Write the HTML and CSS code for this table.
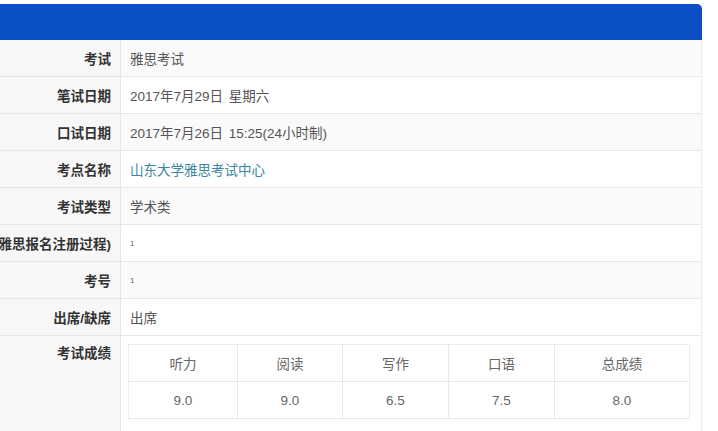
FILE: index.html
```html
<!DOCTYPE html>
<html lang="zh">
<head>
<meta charset="utf-8">
<link rel="stylesheet" href="styles.css">
</head>
<body>
<div class="panel">
  <div class="panel-head"></div>
  <div class="rows">
    <div class="row odd"><div class="label"><span>考试</span></div><div class="value">雅思考试</div></div>
    <div class="row"><div class="label"><span>笔试日期</span></div><div class="value">2017年7月29日 星期六</div></div>
    <div class="row odd"><div class="label"><span>口试日期</span></div><div class="value">2017年7月26日 15:25(24小时制)</div></div>
    <div class="row"><div class="label"><span>考点名称</span></div><div class="value"><span class="link">山东大学雅思考试中心</span></div></div>
    <div class="row odd"><div class="label"><span>考试类型</span></div><div class="value">学术类</div></div>
    <div class="row"><div class="label"><span>(雅思报名注册过程)</span></div><div class="value small">1</div></div>
    <div class="row odd"><div class="label"><span>考号</span></div><div class="value small">1</div></div>
    <div class="row"><div class="label"><span>出席/缺席</span></div><div class="value">出席</div></div>
    <div class="row last"><div class="label top"><span>考试成绩</span></div>
      <div class="value block">
        <div class="scores">
          <div class="sc head">听力</div>
          <div class="sc head">阅读</div>
          <div class="sc head">写作</div>
          <div class="sc head">口语</div>
          <div class="sc head end">总成绩</div>
          <div class="sc">9.0</div>
          <div class="sc">9.0</div>
          <div class="sc">6.5</div>
          <div class="sc">7.5</div>
          <div class="sc end">8.0</div>
        </div>
      </div>
    </div>
  </div>
</div>
</body>
</html>
```
FILE: styles.css
```css
html, body {
  margin: 0;
  padding: 0;
  background: #ffffff;
  overflow: hidden;
}
body {
  font-family: "Liberation Sans", "Noto Sans CJK SC", sans-serif;
  font-size: 13.5px;
  color: #555;
}
.panel {
  margin-top: 4px;
  width: 702px;
}
.panel-head {
  height: 36px;
  background: #0b4fc6;
  border-top-right-radius: 5px;
}
.rows {
  display: flex;
  flex-direction: column;
  border-right: 1px solid #ececec;
}
.row {
  display: grid;
  grid-template-columns: 121px 1fr;
  height: 37px;
  border-bottom: 1px solid #e6e6e6;
  box-sizing: border-box;
  background: #fff;
}
.row.odd {
  background: #fafafa;
}
.row.last {
  height: 100px;
  border-bottom: none;
}
.label {
  display: flex;
  justify-content: flex-end;
  align-items: center;
  padding-right: 9px;
  border-right: 1px solid #e6e6e6;
  background: #f7f7f7;
  font-weight: bold;
  color: #333;
  white-space: nowrap;
  min-width: 0;
}
.label.top {
  align-items: flex-start;
  padding-top: 6px;
}
.value {
  display: flex;
  align-items: center;
  padding-left: 9px;
  color: #555;
  white-space: nowrap;
  word-spacing: 2px;
}
.value.small {
  font-size: 8px;
  color: #666;
}
.value.block {
  align-items: flex-start;
  padding-left: 7px;
  padding-top: 8px;
}
.link {
  color: #3a86a0;
}
.scores {
  display: grid;
  grid-template-columns: 109px 105px 106px 106px 134px;
  border: 1px solid #ececec;
  border-bottom: 1px solid #e6e6e6;
  background: #fff;
}
.sc {
  height: 36px;
  display: flex;
  align-items: center;
  justify-content: center;
  border-right: 1px solid #e8e8e8;
  color: #666;
  font-size: 13.5px;
  box-sizing: border-box;
}
.sc.end {
  border-right: none;
}
.sc.head {
  border-bottom: 1px solid #e6e6e6;
  height: 37px;
}
```
